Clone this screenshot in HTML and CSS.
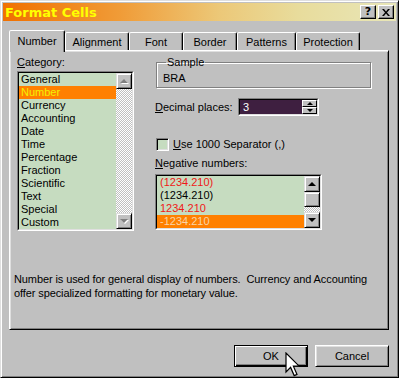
FILE: index.html
```html
<!DOCTYPE html>
<html lang="en">
<head>
    <meta charset="UTF-8">
    <title>Format Cells</title>
    <link rel="stylesheet" href="styles.css">
</head>
<body>
    <div class="window">
        <div class="titlebar">
            <span class="title">Format Cells</span>
            <div class="caption-buttons">
                <button class="caption-btn">?</button>
                <button class="caption-btn">
                    <svg width="8" height="7" viewBox="0 0 8 7"><path d="M0 0h2l2 2.5L6 0h2L5 3.5 8 7H6L4 4.5 2 7H0l3-3.5z" fill="#000"/></svg>
                </button>
            </div>
        </div>

        <div class="dialog">
            <div class="tabs">
                <div class="tab active">Number</div>
                <div class="tab">Alignment</div>
                <div class="tab">Font</div>
                <div class="tab">Border</div>
                <div class="tab">Patterns</div>
                <div class="tab">Protection</div>
            </div>

            <div class="panel">
                <div class="panel-top">
                    <div class="category">
                        <div class="field-label"><u>C</u>ategory:</div>
                        <div class="listbox">
                            <div class="listbox-inner">
                                <ul class="items">
                                    <li>General</li>
                                    <li class="selected">Number</li>
                                    <li>Currency</li>
                                    <li>Accounting</li>
                                    <li>Date</li>
                                    <li>Time</li>
                                    <li>Percentage</li>
                                    <li>Fraction</li>
                                    <li>Scientific</li>
                                    <li>Text</li>
                                    <li>Special</li>
                                    <li>Custom</li>
                                </ul>
                                <div class="scrollbar">
                                    <div class="scroll-btn"><span class="arrow up disabled"></span></div>
                                    <div class="scroll-track"></div>
                                    <div class="scroll-btn"><span class="arrow down disabled"></span></div>
                                </div>
                            </div>
                        </div>
                    </div>

                    <div class="options">
                        <fieldset class="sample">
                            <legend>Sample</legend>
                            <div>BRA</div>
                        </fieldset>

                        <div class="decimal-row">
                            <span class="decimal-label"><u>D</u>ecimal places:</span>
                            <div class="spin">
                                <div class="spin-inner">
                                    <span class="spin-value">3</span>
                                    <div class="spin-buttons">
                                        <div class="spin-btn"><span class="arrow small up"></span></div>
                                        <div class="spin-btn"><span class="arrow small down"></span></div>
                                    </div>
                                </div>
                            </div>
                        </div>

                        <label class="check-row">
                            <span class="checkbox"></span>
                            <span><u>U</u>se 1000 Separator (,)</span>
                        </label>

                        <div class="field-label neg-label"><u>N</u>egative numbers:</div>
                        <div class="listbox neg-list">
                            <div class="listbox-inner">
                                <ul class="items">
                                    <li class="red">(1234.210)</li>
                                    <li>(1234.210)</li>
                                    <li class="red">1234.210</li>
                                    <li class="selected peach">-1234.210</li>
                                </ul>
                                <div class="scrollbar">
                                    <div class="scroll-btn"><span class="arrow up"></span></div>
                                    <div class="scroll-thumb"></div>
                                    <div class="scroll-track"></div>
                                    <div class="scroll-btn"><span class="arrow down"></span></div>
                                </div>
                            </div>
                        </div>
                    </div>
                </div>

                <p class="description">
                    Number is used for general display of numbers.&nbsp; Currency and Accounting<br>
                    offer specialized formatting for monetary value.
                </p>
            </div>

            <div class="buttons">
                <button class="btn default">OK</button>
                <button class="btn">Cancel</button>
            </div>
        </div>

        <!-- mouse pointer over the OK button -->
        <svg class="cursor" width="15" height="27" viewBox="0 0 15 27">
            <path d="M1 1V20L5.6 15.4 9.2 23.6 12 22.4 8.4 14.2H14.2Z" fill="#fff" stroke="#000" stroke-width="1.2"/>
        </svg>
    </div>
</body>
</html>
```

FILE: styles.css
```css
/* General */
body {
    margin: 0;
    font-family: "Liberation Sans", Arial, sans-serif;
    font-size: 11px;
    color: #000;
    background: #c0c0c0;
}

ul {
    list-style: none;
    margin: 0;
    padding: 0;
}

/* Window frame */
.window {
    position: relative;
    width: 399px;
    height: 378px;
    box-sizing: border-box;
    padding: 2px;
    background: #c0c0c0;
    border: 1px solid;
    border-color: #dfdfdf #000 #000 #dfdfdf;
    box-shadow: inset 1px 1px #fff, inset -1px -1px #808080;
    overflow: hidden;
}

/* Title bar */
.titlebar {
    height: 18px;
    display: flex;
    align-items: center;
    justify-content: space-between;
    padding: 0 2px;
    background: linear-gradient(90deg, #f07000 0%, #f09c38 30%, #ecc878 55%, #e8dc9c 75%, #e8e6b8 100%);
}

.title {
    font-family: "DejaVu Sans", sans-serif;
    font-weight: bold;
    font-size: 13px;
    color: #ffff00;
}

.caption-buttons {
    display: flex;
    gap: 2px;
}

.caption-btn {
    width: 16px;
    height: 14px;
    box-sizing: border-box;
    padding: 0;
    display: flex;
    align-items: center;
    justify-content: center;
    background: #c0c0c0;
    border: 1px solid;
    border-color: #fff #000 #000 #fff;
    box-shadow: inset -1px -1px #808080;
    font-family: "DejaVu Sans", sans-serif;
    font-weight: bold;
    font-size: 11px;
    line-height: 12px;
    color: #000;
}

/* Dialog body */
.dialog {
    padding: 9px 7px 0 6px;
}

/* Tabs */
.tabs {
    display: grid;
    grid-template-columns: 56px 64px 54px 54px 59px 64px;
    align-items: end;
    height: 20px;
}

.tab {
    height: 18px;
    box-sizing: border-box;
    padding-top: 3px;
    line-height: 13px;
    text-align: center;
    background: #c0c0c0;
    border: 1px solid;
    border-bottom: none;
    border-color: #fff #000 transparent #fff;
    border-radius: 2px 2px 0 0;
    box-shadow: inset -1px 0 #808080;
}

.tab.active {
    position: relative;
    z-index: 1;
    height: 22px;
    margin-bottom: -2px;
    padding-top: 4px;
}

/* Tab page */
.panel {
    height: 280px;
    box-sizing: border-box;
    padding: 5px 0 0 4px;
    border: 1px solid;
    border-color: #fff #000 #000 #fff;
    box-shadow: inset 1px 1px #dfdfdf, inset -1px -1px #808080;
}

.panel-top {
    display: flex;
    gap: 21px;
    padding-left: 3px;
}

.field-label {
    line-height: 13px;
}

.category {
    width: 117px;
}

/* List boxes */
.listbox {
    margin-top: 2px;
    border: 1px solid;
    border-color: #808080 #fff #fff #808080;
}

.listbox-inner {
    display: flex;
    border: 1px solid;
    border-color: #000 #dfdfdf #dfdfdf #000;
    background: #c6dcc0;
}

.items {
    flex: 1;
}

.items li {
    height: 13px;
    line-height: 13px;
    padding-left: 2px;
    white-space: nowrap;
}

.items li.selected {
    background: #ff8000;
    color: #f4f000;
}

.items li.red {
    color: #f01818;
}

.items li.peach {
    color: #f8d4a8;
}

/* Scroll bars */
.scrollbar {
    width: 16px;
    display: flex;
    flex-direction: column;
    background-image: conic-gradient(#fff 25%, #c0c0c0 0 50%, #fff 0 75%, #c0c0c0 0);
    background-size: 2px 2px;
}

.scroll-btn,
.scroll-thumb {
    height: 16px;
    box-sizing: border-box;
    display: flex;
    align-items: center;
    justify-content: center;
    background: #c0c0c0;
    border: 1px solid;
    border-color: #dfdfdf #000 #000 #dfdfdf;
    box-shadow: inset 1px 1px #fff, inset -1px -1px #808080;
}

.scroll-thumb {
    height: 15px;
}

.scroll-track {
    flex: 1;
}

.arrow {
    width: 0;
    height: 0;
    border-left: 4px solid transparent;
    border-right: 4px solid transparent;
}

.arrow.up {
    border-bottom: 4px solid #000;
}

.arrow.down {
    border-top: 4px solid #000;
}

.arrow.disabled {
    border-bottom-color: #808080;
    border-top-color: #808080;
    filter: drop-shadow(1px 1px 0 #fff);
}

.arrow.small {
    border-left-width: 3px;
    border-right-width: 3px;
}

.arrow.small.up {
    border-bottom-width: 3px;
}

.arrow.small.down {
    border-top-width: 3px;
}

/* Right column */
.options {
    display: flex;
    flex-direction: column;
    align-items: flex-start;
}

.sample {
    width: 215px;
    box-sizing: border-box;
    min-width: 0;
    margin: 0 0 0 1px;
    padding: 3px 6px 2px 6px;
    border: 1px solid #808080;
    box-shadow: inset 1px 1px #fff, 1px 1px #fff;
    line-height: 13px;
}

.sample legend {
    margin-left: 3px;
    padding: 0 1px;
    line-height: 13px;
}

.decimal-row {
    display: flex;
    align-items: center;
    margin-top: 10px;
}

.decimal-label {
    width: 83px;
}

.spin {
    width: 81px;
    box-sizing: border-box;
    border: 1px solid;
    border-color: #808080 #fff #fff #808080;
}

.spin-inner {
    height: 14px;
    display: flex;
    border: 1px solid;
    border-color: #000 #dfdfdf #dfdfdf #000;
    background: #3e1f40;
}

.spin-value {
    flex: 1;
    padding-left: 3px;
    line-height: 14px;
    color: #fff;
}

.spin-buttons {
    width: 15px;
    display: flex;
    flex-direction: column;
}

.spin-btn {
    height: 7px;
    box-sizing: border-box;
    display: flex;
    align-items: center;
    justify-content: center;
    background: #c0c0c0;
    border: 1px solid;
    border-color: #fff #000 #000 #fff;
}

.check-row {
    display: flex;
    align-items: center;
    gap: 4px;
    height: 13px;
    margin: 22px 0 0 1px;
    line-height: 13px;
}

.checkbox {
    width: 13px;
    height: 13px;
    box-sizing: border-box;
    border: 1px solid;
    border-color: #808080 #fff #fff #808080;
    box-shadow: inset 1px 1px #000, inset -1px -1px #dfdfdf;
    background: #c6dcc0;
}

.neg-label {
    margin-top: 6px;
}

.neg-list {
    width: 167px;
    box-sizing: border-box;
    margin-top: 4px;
}

.neg-list .items li {
    padding-left: 3px;
}

/* Description */
.description {
    margin: 41px 0 0;
    line-height: 14px;
    letter-spacing: -0.1px;
}

/* Buttons */
.buttons {
    display: flex;
    justify-content: flex-end;
    gap: 7px;
    margin-top: 15px;
}

.btn {
    width: 74px;
    height: 22px;
    box-sizing: border-box;
    padding: 0;
    font-family: inherit;
    font-size: 11px;
    color: #000;
    background: #c0c0c0;
    border: 1px solid;
    border-color: #fff #000 #000 #fff;
    box-shadow: inset 1px 1px #dfdfdf, inset -1px -1px #808080;
}

.btn.default {
    border-color: #000;
    box-shadow: inset 1px 1px #fff, inset -1px -1px #000, inset -2px -2px #808080;
}

/* Mouse pointer */
.cursor {
    position: absolute;
    left: 284px;
    top: 351px;
}
```
